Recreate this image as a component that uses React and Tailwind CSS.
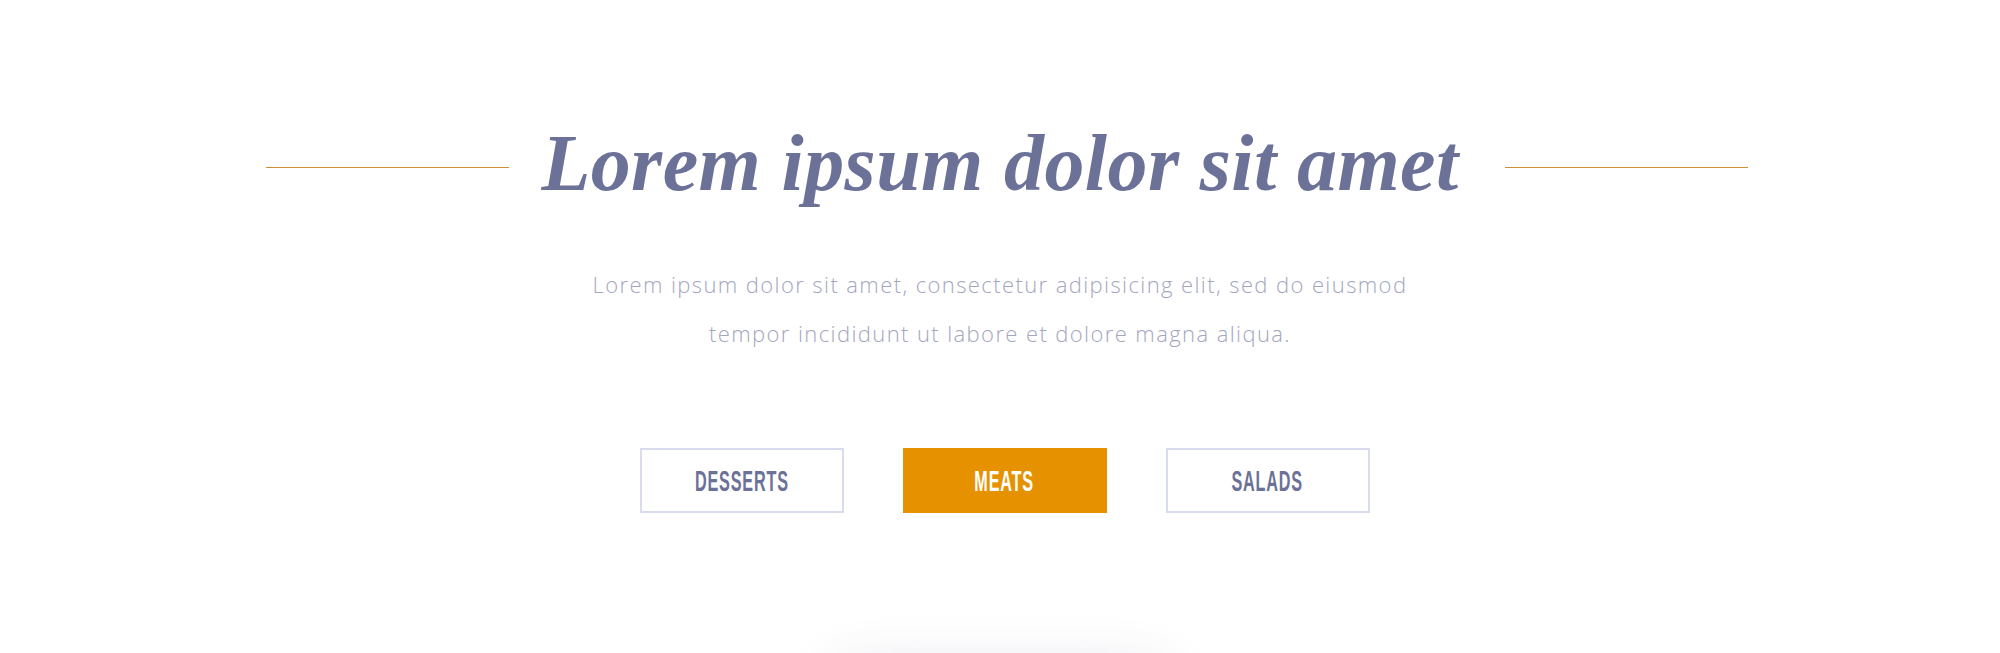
export default function App() {
  const btn =
    "w-[204px] h-[65px] flex items-center justify-center border-2 text-[30px] leading-none";
  const label = "inline-block scale-x-[0.54] tracking-[1.5px] font-bold";
  return (
    <div className="min-h-screen bg-white overflow-hidden">
      <div className="pt-[123px] flex flex-col items-center">
        <div className="flex items-start justify-center w-full pl-[14px]">
          <div className="w-[243px] h-px bg-[#cf8f35] mt-[44px]" />
          <h1
            className="ml-[32px] mr-[46px] text-[80px] leading-[80px] font-bold italic text-[#6b7197] tracking-[0.4px]"
            style={{ fontFamily: '"Liberation Serif", "DejaVu Serif", serif' }}
          >
            Lorem ipsum dolor sit amet
          </h1>
          <div className="w-[243px] h-px bg-[#cf8f35] mt-[44px]" />
        </div>

        <p
          className="mt-[57px] text-center text-[22px] leading-[49px] font-light text-[#a4a6c0] tracking-[1.4px]"
          style={{ fontFamily: '"Open Sans", Lato, sans-serif' }}
        >
          Lorem ipsum dolor sit amet, consectetur adipisicing elit, sed do eiusmod
          <br />
          tempor incididunt ut labore et dolore magna aliqua.
        </p>

        <div
          className="mt-[90px] flex gap-[59px] pl-[9px]"
          style={{ fontFamily: '"Liberation Sans", Arial, sans-serif' }}
        >
          <button className={`${btn} border-[#d9dbee] bg-white text-[#6b7197]`}>
            <span className={label}>DESSERTS</span>
          </button>
          <button className={`${btn} border-[#e69200] bg-[#e69200] text-white`}>
            <span className={label}>MEATS</span>
          </button>
          <button className={`${btn} border-[#d9dbee] bg-white text-[#6b7197]`}>
            <span className={label}>SALADS</span>
          </button>
        </div>

        <div className="mt-[162px] w-[330px] h-[360px] rounded-[24px] bg-white shadow-[0_0_60px_rgba(70,70,120,0.2)]" />
      </div>
    </div>
  );
}
